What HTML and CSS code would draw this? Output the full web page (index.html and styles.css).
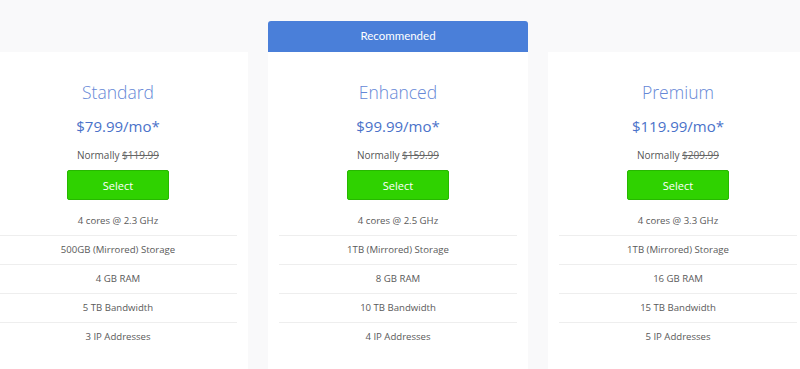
FILE: index.html
```html
<!DOCTYPE html>
<html>
<head>
<meta charset="utf-8">
<link rel="stylesheet" href="styles.css">
</head>
<body>
<div class="plans">
  <div class="col">
    <div class="card">
      <h2 class="title">Standard</h2>
      <div class="price">$79.99/mo*</div>
      <div class="normal">Normally <s>$119.99</s></div>
      <button class="select">Select</button>
      <ul class="features">
        <li>4 cores @ 2.3 GHz</li>
        <li>500GB (Mirrored) Storage</li>
        <li>4 GB RAM</li>
        <li>5 TB Bandwidth</li>
        <li>3 IP Addresses</li>
      </ul>
    </div>
  </div>
  <div class="col">
    <div class="badge">Recommended</div>
    <div class="card">
      <h2 class="title">Enhanced</h2>
      <div class="price">$99.99/mo*</div>
      <div class="normal">Normally <s>$159.99</s></div>
      <button class="select">Select</button>
      <ul class="features">
        <li>4 cores @ 2.5 GHz</li>
        <li>1TB (Mirrored) Storage</li>
        <li>8 GB RAM</li>
        <li>10 TB Bandwidth</li>
        <li>4 IP Addresses</li>
      </ul>
    </div>
  </div>
  <div class="col">
    <div class="card">
      <h2 class="title">Premium</h2>
      <div class="price">$119.99/mo*</div>
      <div class="normal">Normally <s>$209.99</s></div>
      <button class="select">Select</button>
      <ul class="features">
        <li>4 cores @ 3.3 GHz</li>
        <li>1TB (Mirrored) Storage</li>
        <li>16 GB RAM</li>
        <li>15 TB Bandwidth</li>
        <li>5 IP Addresses</li>
      </ul>
    </div>
  </div>
</div>
</body>
</html>
```

FILE: styles.css
```css
html, body {
  margin: 0;
  padding: 0;
  background: #f9f9fa;
  overflow: hidden;
  height: 369px;
}
body {
  font-family: "Open Sans", "Liberation Sans", sans-serif;
  color: #5a5a5a;
}
.plans {
  display: flex;
  gap: 20px;
  margin-left: -12px;
  padding-top: 21px;
  align-items: flex-end;
}
.col {
  width: 260px;
  flex: none;
  display: flex;
  flex-direction: column;
}
.badge {
  height: 31px;
  background: #4a7fd9;
  border-radius: 3px 3px 0 0;
  color: #fff;
  font-family: "Lato", "Open Sans", sans-serif;
  font-size: 11.5px;
  font-weight: 400;
  line-height: 30px;
  text-align: center;
}
.card {
  background: #fff;
  height: 330px;
  padding: 0 11px;
  box-sizing: border-box;
  text-align: center;
}
.title {
  margin: 0;
  padding-top: 27px;
  font-size: 17.5px;
  font-weight: 300;
  color: #6587d6;
  line-height: 26px;
}
.price {
  margin-top: 10px;
  font-size: 15px;
  color: #4a72c9;
  line-height: 22px;
}
.normal {
  margin-top: 11px;
  font-size: 10px;
  line-height: 14px;
  color: #555;
}
.normal s {
  color: #666;
}
.select {
  display: block;
  margin: 8px auto 0;
  width: 102px;
  height: 30px;
  border: 1px solid #27b800;
  border-radius: 2px;
  background: #2fd200;
  color: #fff;
  font-family: inherit;
  font-size: 11px;
  padding: 0;
}
.features {
  list-style: none;
  margin: 7px 0 0;
  padding: 0;
}
.features li {
  font-size: 9.6px;
  line-height: 28px;
  height: 28px;
  border-bottom: 1px solid #eee;
}
.features li:last-child {
  border-bottom: none;
}
```
